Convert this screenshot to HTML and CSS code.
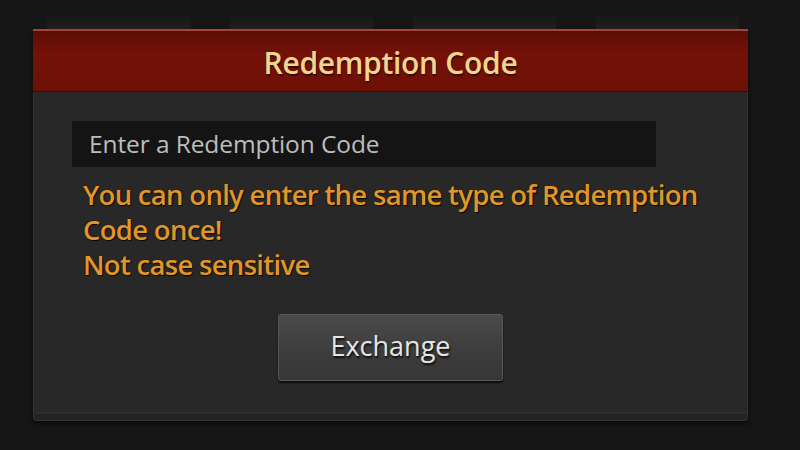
FILE: index.html
```html
<!DOCTYPE html>
<html lang="en">
<head>
<meta charset="utf-8">
<title>Redemption Code</title>
<link rel="stylesheet" href="styles.css">
</head>
<body>
<div class="screen">
  <div class="tabs">
    <span class="tab"></span><span class="tab"></span><span class="tab"></span><span class="tab"></span>
  </div>
  <section class="dialog">
    <header class="dialog-head">
      <h1 class="dialog-title">Redemption Code</h1>
    </header>
    <div class="dialog-body">
      <div class="code-field">Enter a Redemption Code</div>
      <p class="notice">You can only enter the same type of Redemption<br>Code once!<br>Not case sensitive</p>
      <div class="actions">
        <button class="btn-exchange" type="button">Exchange</button>
      </div>
    </div>
  </section>
</div>
</body>
</html>
```

FILE: styles.css
```css
* { box-sizing: border-box; }

html, body {
  margin: 0;
  padding: 0;
  width: 800px;
  height: 450px;
  background: #161616;
  overflow: hidden;
  font-family: "Open Sans", "Noto Sans", sans-serif;
}

.screen {
  position: relative;
  width: 800px;
  height: 450px;
  padding: 29px 52px 0 33px;
}

/* faint tab strip peeking out behind the dialog */
.tabs {
  position: absolute;
  top: 14px;
  left: 47px;
  display: flex;
  gap: 40px;
}
.tab {
  width: 143px;
  height: 16px;
  border-radius: 4px 4px 0 0;
  background: linear-gradient(#171717, #1b1b1a 50%, #22211e);
}

.dialog {
  position: relative;
  width: 715px;
  height: 392px;
  background: #282828;
  border: 1px solid #343434;
  border-top: none;
  border-radius: 0 0 4px 4px;
  box-shadow: 0 3px 4px rgba(0, 0, 0, 0.6), inset 0 -6px 0 #232323, inset 0 -8px 0 #2e2e2e;
  display: flex;
  flex-direction: column;
}

.dialog-head {
  height: 63px;
  background: linear-gradient(#5e0d05 0%, #741208 40%, #6e1006 100%);
  border-top: 2px solid #a6443c;
  border-bottom: 1px solid #3d0804;
  display: flex;
  align-items: center;
  justify-content: center;
  margin: 0 -1px;
}

.dialog-title {
  margin: 0;
  font-size: 30px;
  font-weight: 600;
  color: #f3d58e;
  letter-spacing: -0.3px;
  text-shadow: 1px 2px 1px rgba(40, 10, 0, 0.8);
  padding-top: 2px;
}

.dialog-body {
  padding: 29px 0 0 38px;
  display: flex;
  flex-direction: column;
}

.code-field {
  width: 584px;
  height: 46px;
  background: #141414;
  color: #bdbdbd;
  font-size: 24.5px;
  font-weight: 500;
  line-height: 46px;
  padding-left: 17px;
  letter-spacing: -0.1px;
}

.notice {
  margin: 10px 0 0 11px;
  color: #e09629;
  font-size: 27.5px;
  line-height: 35px;
  font-weight: 600;
  letter-spacing: -0.7px;
  text-shadow: 1px 1px 1px rgba(0, 0, 0, 0.8), 0 0 1px rgba(0, 0, 0, 0.6);
}

.actions {
  display: flex;
  padding-left: 206px;
  margin-top: 32px;
}

.btn-exchange {
  width: 225px;
  height: 67px;
  font-family: inherit;
  font-size: 27px;
  font-weight: 500;
  color: #e6e6e6;
  background: linear-gradient(#4a4a4a, #3c3c3c 60%, #363636);
  border: 1px solid #575757;
  border-radius: 3px;
  box-shadow: 0 2px 2px rgba(0, 0, 0, 0.7);
  text-shadow: 1px 2px 2px rgba(0, 0, 0, 0.8);
  padding: 0 0 4px;
}
```
